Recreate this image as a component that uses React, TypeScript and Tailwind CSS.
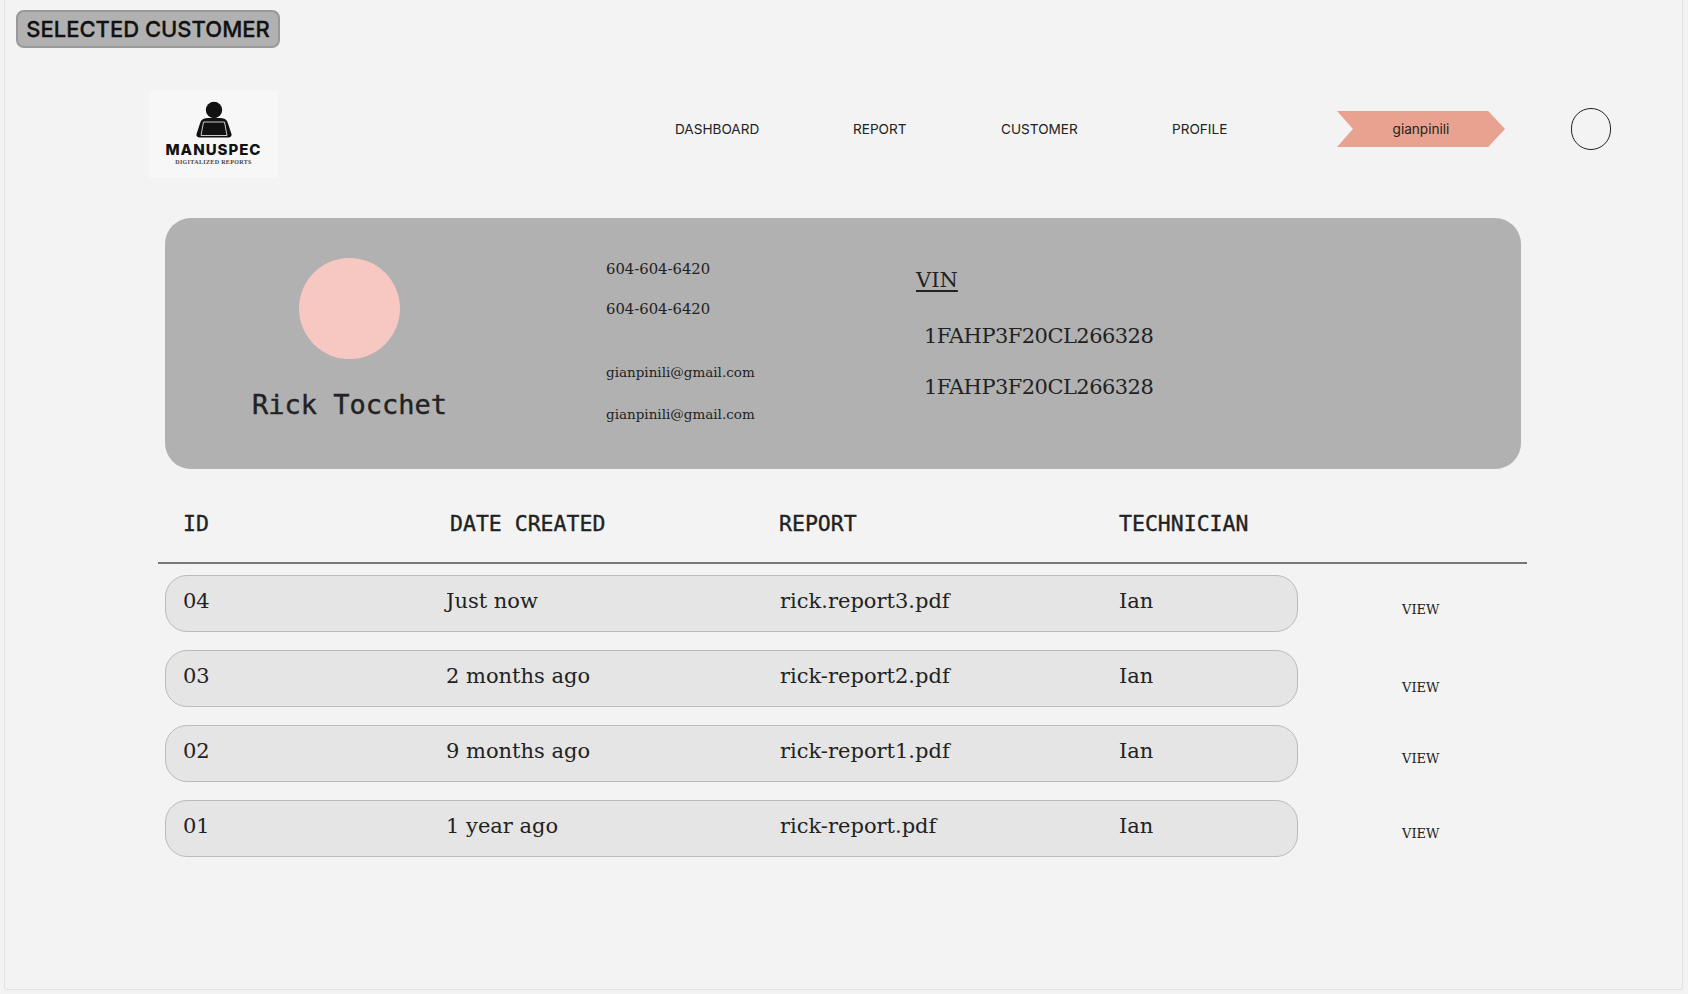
const serif = "font-['DejaVu_Serif',serif]";

const rows = [
  { id: "04", date: "Just now", report: "rick.report3.pdf", tech: "Ian", viewPad: "pt-[25px]" },
  { id: "03", date: "2 months ago", report: "rick-report2.pdf", tech: "Ian", viewPad: "pt-[28px]" },
  { id: "02", date: "9 months ago", report: "rick-report1.pdf", tech: "Ian", viewPad: "pt-[24px]" },
  { id: "01", date: "1 year ago", report: "rick-report.pdf", tech: "Ian", viewPad: "pt-[24px]" },
];

function Logo() {
  return (
    <div className="flex h-[87px] w-[129px] flex-col items-center bg-[#f7f7f7] pt-[10px]">
      <svg width="40" height="37" viewBox="0 0 40 37">
        <circle cx="20" cy="9" r="8.2" fill="#111" />
        <path d="M7 20C8 18 11 17 14 17h12c3 0 6 1 7 3 1.500 3 3 9 4.500 13 .5 2-1 3.500-3 3.500H5.500c-2 0-3.500-1.500-3-3.500C4 29 5.500 23 7 20z" fill="#111" />
        <path d="M9.500 21h21l2.500 13.500H7z" fill="#111" stroke="#f7f7f7" strokeWidth="0.8" />
      </svg>
      <div className="mt-[4px] font-['Inter',sans-serif] text-[15px] leading-[15px] font-extrabold tracking-[1px] text-[#111]">
        MANUSPEC
      </div>
      <div className="mt-[2px] font-['Liberation_Serif',serif] text-[6px] leading-[7px] font-bold tracking-[0.35px] text-[#444]">
        DIGITALIZED REPORTS
      </div>
    </div>
  );
}

function Nav() {
  return (
    <nav className="mt-[20px] ml-[397px] flex h-[36px] items-center font-['Inter',sans-serif] text-[13.6px] text-[#222]">
      <a className="w-[178px] pt-px">DASHBOARD</a>
      <a className="w-[148px] pt-px">REPORT</a>
      <a className="w-[171px] pt-px">CUSTOMER</a>
      <a className="w-[165px] pt-px">PROFILE</a>
      <div className="flex h-[36px] w-[168px] items-center justify-center bg-[#e8a28f] pt-px [clip-path:polygon(0_0,90%_0,100%_50%,90%_100%,0_100%,9.500%_50%)]">
        gianpinili
      </div>
      <div className="ml-[66px] h-[42px] w-[40px] rounded-full border-[1.5px] border-[#222]" />
    </nav>
  );
}

function CustomerCard() {
  return (
    <section className={`mt-[40px] ml-[160px] flex h-[251px] w-[1356px] rounded-[26px] bg-[#b1b1b1] text-[#222] ${serif}`}>
      <div className="flex w-[369px] flex-col items-center pt-[40px]">
        <div className="h-[101px] w-[101px] rounded-full bg-[#f7c8c2]" />
        <div className="mt-[28px] font-['DejaVu_Sans_Mono',monospace] text-[27px] leading-[36px] [-webkit-text-stroke:0.4px_#222]">
          Rick Tocchet
        </div>
      </div>
      <div className="ml-[72px] w-[310px] pt-[42px] leading-[18px]">
        <div className="text-[14.8px]">604-604-6420</div>
        <div className="mt-[22px] text-[14.8px]">604-604-6420</div>
        <div className="mt-[45px] text-[13.5px]">gianpinili@gmail.com</div>
        <div className="mt-[24px] text-[13.5px]">gianpinili@gmail.com</div>
      </div>
      <div className="pt-[46px] text-[21px]">
        <div className="leading-[32px] underline underline-offset-[3px]">VIN</div>
        <div className="mt-[24px] ml-[8px] leading-[32px] tracking-[-0.55px]">1FAHP3F20CL266328</div>
        <div className="mt-[19px] ml-[8px] leading-[32px] tracking-[-0.55px]">1FAHP3F20CL266328</div>
      </div>
    </section>
  );
}

function ReportTable() {
  return (
    <section className="mt-[34px]">
      <div className="ml-[153px] flex h-[61px] w-[1369px] border-b-2 border-[#777] pl-[25px] font-['DejaVu_Sans_Mono',monospace] text-[21.5px] leading-[42px] text-[#222] [-webkit-text-stroke:0.35px_#222]">
        <div className="w-[267px]">ID</div>
        <div className="w-[329px]">DATE CREATED</div>
        <div className="w-[340px]">REPORT</div>
        <div>TECHNICIAN</div>
      </div>
      <div className="mt-[11px] ml-[160px] flex flex-col gap-[18px]">
        {rows.map((row) => (
          <div key={row.id} className="flex">
            <div className={`flex h-[57px] w-[1133px] items-center rounded-[22px] border border-[#bbb] bg-[#e5e5e5] pb-[3px] pl-[17px] text-[21px] text-[#222] ${serif}`}>
              <div className="w-[263px]">{row.id}</div>
              <div className="w-[334px]">{row.date}</div>
              <div className="w-[339px]">{row.report}</div>
              <div>{row.tech}</div>
            </div>
            <div className={`ml-[104px] text-[13px] leading-[20px] text-[#222] ${row.viewPad} ${serif}`}>VIEW</div>
          </div>
        ))}
      </div>
    </section>
  );
}

export default function App() {
  return (
    <div className="h-[994px] w-full overflow-hidden bg-[#f3f3f3]">
      <div className="mr-[5px] ml-[4px] h-[990px] rounded-b-[3px] border-x border-b border-[#e2e2e2] pt-[10px]">
        <div className="ml-[11px] flex h-[38px] w-[264px] items-center justify-center rounded-[8px] border-2 border-[#999] bg-[#b1b1b1] pt-px font-['Inter',sans-serif] text-[22px] font-medium whitespace-nowrap text-[#111] [-webkit-text-stroke:0.3px_#111]">
          SELECTED CUSTOMER
        </div>
        <header className="mt-[43px] ml-[144px] flex items-start">
          <Logo />
          <Nav />
        </header>
        <CustomerCard />
        <ReportTable />
      </div>
    </div>
  );
}
